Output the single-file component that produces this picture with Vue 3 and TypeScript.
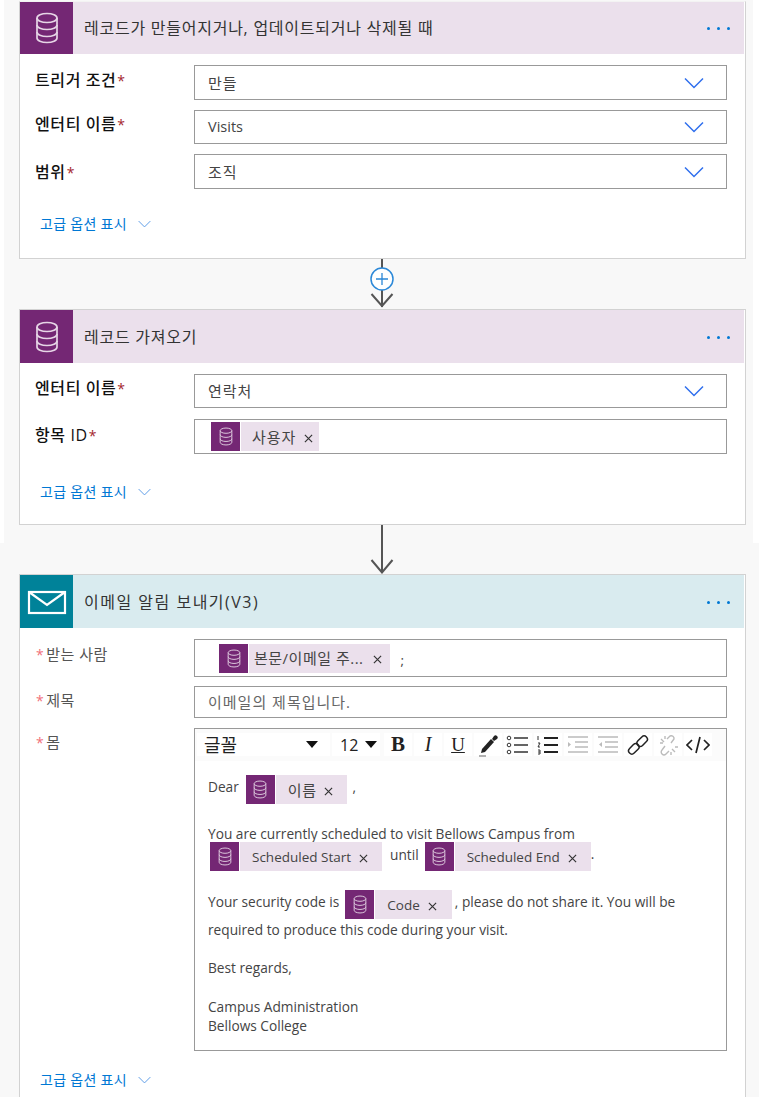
<template>
  <div class="page">
    <svg class="defs" width="0" height="0">
      <symbol id="db" viewBox="0 0 24 32">
        <g fill="none" stroke="currentColor" stroke-width="1.7">
          <ellipse cx="12" cy="6" rx="10" ry="4.5" />
          <path d="M2 6v20c0 2.5 4.5 4.5 10 4.5s10-2 10-4.5V6" />
          <path d="M2 13c0 2.5 4.5 4.5 10 4.5s10-2 10-4.5" />
          <path d="M2 20c0 2.5 4.5 4.5 10 4.5s10-2 10-4.5" />
        </g>
      </symbol>
      <symbol id="close" viewBox="0 0 10 10">
        <path d="M1 1l8 8M9 1l-8 8" fill="none" stroke="currentColor" stroke-width="1.3" />
      </symbol>
      <symbol id="chev" viewBox="0 0 20 12">
        <path d="M1 1.5l9 9 9-9" fill="none" stroke="currentColor" stroke-width="1.5" />
      </symbol>
    </svg>

    <section class="sheet-top">
      <div class="card card-first">
        <header class="head head-purple head-short">
          <div class="head-icon purple"><svg class="db-big"><use href="#db" /></svg></div>
          <h2 class="head-title">레코드가 만들어지거나, 업데이트되거나 삭제될 때</h2>
          <div class="dots"><i></i><i></i><i></i></div>
        </header>
        <div class="body gap10">
          <div class="row">
            <label class="lab strong pt6">트리거 조건<em>*</em></label>
            <div class="input h35"><span class="ko">만들</span><svg class="chev"><use href="#chev" /></svg></div>
          </div>
          <div class="row">
            <label class="lab strong pt5">엔터티 이름<em>*</em></label>
            <div class="input h34"><span class="latin">Visits</span><svg class="chev"><use href="#chev" /></svg></div>
          </div>
          <div class="row">
            <label class="lab strong pt9">범위<em>*</em></label>
            <div class="input h35"><span class="ko">조직</span><svg class="chev"><use href="#chev" /></svg></div>
          </div>
          <a class="more more-a">고급 옵션 표시<svg class="more-chev"><use href="#chev" /></svg></a>
        </div>
      </div>

      <svg class="connector" width="24" height="50" viewBox="0 0 24 50">
        <path d="M12 0v48" stroke="#555" stroke-width="2" />
        <path d="M1.5 35L12 47 22.500 35" fill="none" stroke="#555" stroke-width="2" />
        <circle cx="12" cy="20" r="11" fill="#fff" stroke="#2b88d8" stroke-width="1.5" />
        <path d="M12 14v12M6 20h12" stroke="#2b88d8" stroke-width="1.3" />
      </svg>

      <div class="card card-second">
        <header class="head head-purple">
          <div class="head-icon purple"><svg class="db-big"><use href="#db" /></svg></div>
          <h2 class="head-title">레코드 가져오기</h2>
          <div class="dots"><i></i><i></i><i></i></div>
        </header>
        <div class="body gap11">
          <div class="row">
            <label class="lab strong pt5">엔터티 이름<em>*</em></label>
            <div class="input h34"><span class="ko">연락처</span><svg class="chev"><use href="#chev" /></svg></div>
          </div>
          <div class="row">
            <label class="lab strong pt7">항목 ID<em>*</em></label>
            <div class="input h35 tokens">
              <span class="chip chip-id">
                <span class="chip-icon"><svg><use href="#db" /></svg></span>
                <span class="chip-label"><span class="ko">사용자</span><svg class="x"><use href="#close" /></svg></span>
              </span>
            </div>
          </div>
          <a class="more more-b">고급 옵션 표시<svg class="more-chev"><use href="#chev" /></svg></a>
        </div>
      </div>
      <div class="stub"></div>
    </section>

    <section class="sheet-bottom">
      <svg class="connector" width="24" height="31" viewBox="0 0 24 31">
        <path d="M12 0v29" stroke="#555" stroke-width="2" />
        <path d="M1.500 17L12 29.500 22.500 17" fill="none" stroke="#555" stroke-width="2" />
      </svg>

      <div class="card card-last">
        <header class="head head-teal">
          <div class="head-icon teal">
            <svg width="40" height="26" viewBox="0 0 40 26" fill="none" stroke="#fff" stroke-width="2.200">
              <rect x="2" y="3" width="36" height="21" />
              <path d="M2 3l18 13L38 3" />
            </svg>
          </div>
          <h2 class="head-title">이메일 알림 보내기(V3)</h2>
          <div class="dots"><i></i><i></i><i></i></div>
        </header>
        <div class="body">
          <div class="row">
            <label class="lab soft pt6"><em>*</em>받는 사람</label>
            <div class="input h38 tokens">
              <span class="chip chip-to">
                <span class="chip-icon"><svg><use href="#db" /></svg></span>
                <span class="chip-label"><span class="ko-tight">본문/이메일 주...</span><svg class="x"><use href="#close" /></svg></span>
              </span>
              <span class="semi">;</span>
            </div>
          </div>
          <div class="row mt9">
            <label class="lab soft pt5"><em>*</em>제목</label>
            <div class="input h32 placeholder"><span class="ko">이메일의 제목입니다.</span></div>
          </div>
          <div class="row mt10">
            <label class="lab soft pt5"><em>*</em>몸</label>
            <div class="editor">
              <div class="toolbar">
                <div class="tool tool-font">글꼴<i class="caret"></i></div>
                <div class="tool tool-size">12<i class="caret"></i></div>
                <div class="tool tool-b">B</div>
                <div class="tool tool-i">I</div>
                <div class="tool tool-u">U</div>
                <div class="tool">
                  <svg width="22" height="24" viewBox="0 0 22 24">
                    <path d="M4 20l1-4 9-10 3 3-9 10z" fill="#222" />
                    <path d="M15 6l2-3c1-1 2-1 3 0s1 2 0 3l-3 2z" fill="#222" />
                    <path d="M2 23h7" stroke="#999" stroke-width="1.500" />
                  </svg>
                </div>
                <div class="tool">
                  <svg width="24" height="22" viewBox="0 0 24 22" fill="none">
                    <circle cx="3" cy="4" r="1.800" stroke="#333" />
                    <circle cx="3" cy="11" r="1.800" stroke="#333" />
                    <circle cx="3" cy="18" r="1.800" stroke="#333" />
                    <path d="M8 4h14M8 11h14M8 18h14" stroke="#333" stroke-width="1.500" />
                  </svg>
                </div>
                <div class="tool">
                  <svg width="24" height="22" viewBox="0 0 24 22" fill="none">
                    <path d="M2 2v4M2 9h2l-2 4h2M2 16h2v4H2M2 18h2" stroke="#333" />
                    <path d="M8 4h14M8 11h14M8 18h14" stroke="#222" stroke-width="2" />
                  </svg>
                </div>
                <div class="tool">
                  <svg width="24" height="20" viewBox="0 0 24 20" fill="none" stroke="#bbb" stroke-width="1.500">
                    <path d="M2 2h20M9 7h13M9 12h13M2 17h20" />
                    <path d="M2 7l3 2.500L2 12z" fill="#bbb" stroke="none" />
                  </svg>
                </div>
                <div class="tool">
                  <svg width="24" height="20" viewBox="0 0 24 20" fill="none" stroke="#bbb" stroke-width="1.500">
                    <path d="M2 2h20M9 7h13M9 12h13M2 17h20" />
                    <path d="M6 7L3 9.500 6 12z" fill="#bbb" stroke="none" />
                  </svg>
                </div>
                <div class="tool">
                  <svg width="22" height="22" viewBox="0 0 22 22" fill="none" stroke="#222" stroke-width="1.500">
                    <rect x="1" y="11.500" width="12" height="6.500" rx="3.250" transform="rotate(-45 7 15)" />
                    <rect x="9" y="4" width="12" height="6.500" rx="3.250" transform="rotate(-45 15 7)" />
                  </svg>
                </div>
                <div class="tool">
                  <svg width="22" height="22" viewBox="0 0 22 22" fill="none" stroke="#bbb" stroke-width="1.400">
                    <path d="M8 12l-3 4a2.800 2.800 0 0 0 4 4l3-3" />
                    <path d="M14 9l3-4a2.800 2.800 0 0 0-4-3l-3 3" />
                    <path d="M4 5l3 3M3 9h3M8 2v3M15 15l3 3M14 18v3M18 13h3" />
                  </svg>
                </div>
                <div class="tool">
                  <svg width="24" height="20" viewBox="0 0 24 20" fill="none" stroke="#222" stroke-width="1.700">
                    <path d="M6 5L1 10l5 5M18 5l5 5-5 5M14 2l-4 16" />
                  </svg>
                </div>
              </div>
              <div class="mail">
                <div class="mail-line">
                  <span class="txt-up">Dear</span>
                  <span class="chip chip-name">
                    <span class="chip-icon"><svg><use href="#db" /></svg></span>
                    <span class="chip-label"><span class="ko-tight">이름</span><svg class="x"><use href="#close" /></svg></span>
                  </span>
                  <span class="txt-up">,</span>
                </div>
                <p class="mail-text mt21">You are currently scheduled to visit Bellows Campus from</p>
                <div class="mail-line chips-row">
                  <span class="chip">
                    <span class="chip-icon"><svg><use href="#db" /></svg></span>
                    <span class="chip-label">Scheduled Start<svg class="x"><use href="#close" /></svg></span>
                  </span>
                  <span class="txt-up until">until</span>
                  <span class="chip">
                    <span class="chip-icon"><svg><use href="#db" /></svg></span>
                    <span class="chip-label">Scheduled End<svg class="x"><use href="#close" /></svg></span>
                  </span>
                  <span class="txt-up">.</span>
                </div>
                <div class="mail-line mt19">
                  <span class="txt-up">Your security code is</span>
                  <span class="chip chip-code">
                    <span class="chip-icon"><svg><use href="#db" /></svg></span>
                    <span class="chip-label">Code<svg class="x"><use href="#close" /></svg></span>
                  </span>
                  <span class="txt-up">, please do not share it. You will be</span>
                </div>
                <p class="mail-text mt2">required to produce this code during your visit.</p>
                <p class="mail-text mt20">Best regards,</p>
                <p class="mail-text mt21">Campus Administration</p>
                <p class="mail-text mt1">Bellows College</p>
              </div>
            </div>
          </div>
          <a class="more more-c">고급 옵션 표시<svg class="more-chev"><use href="#chev" /></svg></a>
        </div>
      </div>
    </section>
  </div>
</template>

<script setup lang="ts">
</script>

<style>
html,
body {
  background: #fff;
  overflow: hidden;
}
</style>

<style scoped>
.page {
  width: 765px;
  height: 1097px;
  overflow: hidden;
  font-family: "Open Sans", "Noto Sans CJK KR", sans-serif;
  font-size: 14px;
  line-height: 18px;
  color: #3b3b3b;
}

.defs {
  position: absolute;
}

.sheet-top {
  width: 749px;
  height: 543px;
  margin-left: 4px;
  padding: 1px 0 0 15px;
  box-sizing: border-box;
  background: #f8f8f8;
}

.sheet-bottom {
  width: 759px;
  height: 554px;
  padding-left: 19px;
  box-sizing: border-box;
  background: #f8f8f8;
}

.card {
  width: 727px;
  box-sizing: border-box;
  background: #fff;
  border: 1px solid #d2d2d2;
}

.card-first {
  height: 258px;
  border-top-color: #f3f3f3;
}

.card-second {
  height: 216px;
}

.card-last {
  height: 600px;
}

.connector {
  display: block;
  margin-left: 351px;
}

.stub {
  width: 2px;
  height: 18px;
  margin-left: 362px;
  background: #555;
}

.head {
  display: flex;
  align-items: center;
  height: 53px;
  margin-right: 1px;
}

.head-short {
  height: 52px;
}

.head-purple {
  background: #ebe0ec;
}

.head-teal {
  background: #d9ebef;
}

.head-icon {
  width: 53px;
  height: 100%;
  display: flex;
  align-items: center;
  justify-content: center;
  flex: none;
}

.purple {
  background: #742774;
  color: #e6d5e6;
}

.teal {
  background: #008299;
}

.db-big {
  width: 24px;
  height: 34px;
}

.head-title {
  flex: 1;
  margin: 0 0 0 11px;
  font-size: 16px;
  font-weight: 400;
  line-height: 20px;
  letter-spacing: 0.75px;
  color: #333;
}

.head-teal .head-title {
  letter-spacing: 1.5px;
}

.dots {
  display: flex;
  gap: 7px;
  margin-right: 14px;
  margin-top: 1px;
}

.dots i {
  width: 3px;
  height: 3px;
  border-radius: 50%;
  background: #0078d4;
}

.body {
  padding: 11px 18px 0 0;
  display: flex;
  flex-direction: column;
}

.gap10 {
  gap: 10px;
}

.gap11 {
  gap: 11px;
}

.mt9 {
  margin-top: 9px;
}

.mt10 {
  margin-top: 10px;
}

.row {
  display: flex;
  align-items: flex-start;
}

.lab {
  width: 174px;
  flex: none;
  padding-left: 15px;
  box-sizing: border-box;
}

.strong {
  font-size: 16px;
  font-weight: 500;
  letter-spacing: 0.6px;
  color: #111;
}

.strong em {
  margin-left: 1px;
  font-size: 14px;
  color: #a4262c;
  font-style: normal;
}

.soft {
  font-size: 15px;
  letter-spacing: 0.5px;
  color: #555;
}

.soft em {
  margin: 0 2px 0 1px;
  font-size: 14px;
  color: #f1707b;
  font-style: normal;
}

.pt5 {
  padding-top: 5px;
}

.pt6 {
  padding-top: 6px;
}

.pt7 {
  padding-top: 7px;
}

.pt9 {
  padding-top: 9px;
}

.input {
  flex: 1;
  display: flex;
  align-items: center;
  justify-content: space-between;
  box-sizing: border-box;
  padding: 0 22px 0 13px;
  background: #fff;
  border: 1px solid #999;
  font-size: 13.500px;
  color: #444;
}

.ko {
  font-size: 15px;
  letter-spacing: 1px;
}

.ko-tight {
  font-size: 15px;
  letter-spacing: 0.5px;
}

.latin {
  font-size: 14.500px;
}

.h32 {
  height: 32px;
}

.h34 {
  height: 34px;
}

.h35 {
  height: 35px;
}

.h38 {
  height: 38px;
}

.chev {
  width: 20px;
  height: 12px;
  color: #2f6fed;
}

.placeholder {
  color: #666;
}

.tokens {
  justify-content: flex-start;
  padding: 0;
}

.chip {
  display: inline-flex;
  height: 29px;
  flex: none;
  gap: 1px;
}

.chip-icon {
  width: 29px;
  display: flex;
  align-items: center;
  justify-content: center;
  background: #742774;
  color: #dcc7dc;
}

.chip-icon svg {
  width: 14px;
  height: 19px;
}

.chip-label {
  display: flex;
  align-items: center;
  padding: 0 14px 0 12px;
  background: #ebe0ec;
  font-size: 13.500px;
  color: #444;
}

.x {
  width: 9px;
  height: 9px;
  margin: 3px 0 0 8px;
  color: #333;
}

.chip-id {
  margin-left: 16px;
}

.chip-id .chip-label {
  padding: 0 6px 0 11px;
}

.chip-to {
  margin-left: 24px;
}

.chip-to .chip-label {
  padding: 0 8px 0 5px;
}

.chip-to .x {
  margin-left: 9px;
}

.semi {
  margin: 4px 0 0 11px;
}

.chip-name {
  margin: 0 5px 0 7px;
}

.chip-code {
  margin: 0 3px 0 6px;
}

.chip-code .chip-label {
  padding-right: 15px;
}

.editor {
  flex: 1;
  height: 323px;
  box-sizing: border-box;
  border: 1px solid #999;
}

.toolbar {
  display: flex;
  gap: 2px;
  height: 32px;
  padding: 4px 1px 0 2px;
  box-sizing: border-box;
  background: #fbfbfb;
}

.tool {
  width: 28px;
  height: 23px;
  display: flex;
  align-items: center;
  justify-content: center;
  background: #fff;
  color: #222;
}

.tool-font {
  width: 133px;
  justify-content: space-between;
  padding: 0 12px 0 7px;
  box-sizing: border-box;
  font-size: 18px;
}

.tool-size {
  width: 48px;
  justify-content: flex-start;
  padding-left: 8px;
  gap: 7px;
  box-sizing: border-box;
  font-size: 16px;
}

.tool-b {
  margin-left: 2px;
  font: 700 21px "Liberation Serif", serif;
}

.tool-i {
  font: italic 400 20px "Liberation Serif", serif;
}

.tool-u {
  font: 400 19px "Liberation Serif", serif;
  text-decoration: underline;
}

.caret {
  width: 0;
  height: 0;
  border-left: 6px solid transparent;
  border-right: 6px solid transparent;
  border-top: 7px solid #111;
}

.mail {
  padding: 14px 0 0 13px;
  font-size: 13.700px;
  color: #444;
}

.mail-line {
  display: flex;
  align-items: flex-start;
  white-space: nowrap;
}

.mail-text {
  margin: 0;
}

.mt1 {
  margin-top: 1px;
}

.mt2 {
  margin-top: 2px;
}

.mt19 {
  margin-top: 19px;
}

.mt20 {
  margin-top: 20px;
}

.mt21 {
  margin-top: 21px;
}

.txt-up {
  margin-top: 3px;
}

.chips-row {
  margin: -1px 0 0 2px;
}

.until {
  margin: 4px 6px 0 8px;
}

.more {
  display: flex;
  align-items: center;
  padding-left: 20px;
  font-size: 14px;
  letter-spacing: 0.3px;
  color: #0078d4;
}

.more-a {
  margin-top: 16px;
}

.more-b {
  margin-top: 18px;
}

.more-c {
  margin-top: 20px;
}

.more-chev {
  width: 13px;
  height: 8px;
  margin-left: 11px;
  color: #5a9be6;
}
</style>
